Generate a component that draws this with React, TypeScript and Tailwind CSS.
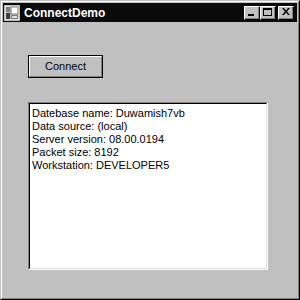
import React from "react";

function TitleButton({ children }: { children: React.ReactNode }) {
  return (
    <div className="w-[16px] h-[14px] bg-[#c0c0c0] border border-t-white border-l-white border-r-black border-b-black">
      <div className="w-full h-full border-r border-b border-r-[#808080] border-b-[#808080] flex items-center justify-center">
        {children}
      </div>
    </div>
  );
}

export default function App() {
  const lines = [
    "Datebase name: Duwamish7vb",
    "Data source: (local)",
    "Server version: 08.00.0194",
    "Packet size: 8192",
    "Workstation: DEVELOPER5",
  ];
  return (
    <div
      className="w-[300px] h-[300px] bg-[#c0c0c0] border border-t-[#c0c0c0] border-l-[#c0c0c0] border-r-black border-b-black"
      style={{ fontFamily: '"Liberation Sans", Arial, sans-serif' }}
    >
      <div className="w-full h-full border border-t-white border-l-white border-r-[#808080] border-b-[#808080] p-[1px] flex flex-col">
        {/* Title bar */}
        <div className="h-[19px] bg-[#0a0a0a] flex items-center pl-[1px] pr-[3px]">
          <svg width="16" height="16" viewBox="0 0 16 16" className="shrink-0">
            <rect x="0.5" y="0.5" width="15" height="15" fill="#c0c0c0" stroke="#808080" />
            <rect x="1" y="1" width="14" height="14" fill="none" stroke="#fff" strokeWidth="1" />
            <rect x="2" y="2" width="4" height="5" fill="#808080" />
            <rect x="7" y="2" width="7" height="7" fill="#ffffff" stroke="#808080" strokeWidth="1" />
            <rect x="2" y="8" width="4" height="6" fill="#404040" />
            <rect x="7" y="10" width="7" height="4" fill="#808080" />
            <rect x="8" y="11" width="5" height="2" fill="#e0e0e0" />
          </svg>
          <span className="ml-[4px] text-white font-bold text-[12px] leading-none">ConnectDemo</span>
          <div className="ml-auto flex items-center">
            <TitleButton>
              <div className="w-[6px] h-[2px] bg-black mt-[6px] -ml-[2px]" />
            </TitleButton>
            <TitleButton>
              <div className="w-[9px] h-[8px] border border-black border-t-2 -mt-[1px]" />
            </TitleButton>
            <div className="ml-[2px]">
              <TitleButton>
                <svg width="8" height="7" viewBox="0 0 8 7" className="-mt-[1px]">
                  <path d="M0 0h2l2 2.5L6 0h2L5 3.5 8 7H6L4 4.5 2 7H0l3-3.5z" fill="#000" />
                </svg>
              </TitleButton>
            </div>
          </div>
        </div>

        {/* Client area */}
        <div className="flex-1 pl-[25px] pt-[33px] flex flex-col items-start">
          <div className="w-[75px] h-[23px] border border-black">
            <div className="w-full h-full border border-t-white border-l-white border-r-[#808080] border-b-[#808080] flex items-center justify-center">
              <span className="text-[11px] text-black leading-none">Connect</span>
            </div>
          </div>

          <div className="mt-[24px] w-[240px] h-[168px] border border-t-[#808080] border-l-[#808080] border-r-white border-b-white">
            <div className="w-full h-full border border-t-black border-l-black border-r-[#dfdfdf] border-b-[#dfdfdf] bg-white pl-[2px] pt-[3px]">
              {lines.map((l) => (
                <div key={l} className="text-[11px] leading-[13px] text-black whitespace-nowrap">
                  {l}
                </div>
              ))}
            </div>
          </div>
        </div>
      </div>
    </div>
  );
}
